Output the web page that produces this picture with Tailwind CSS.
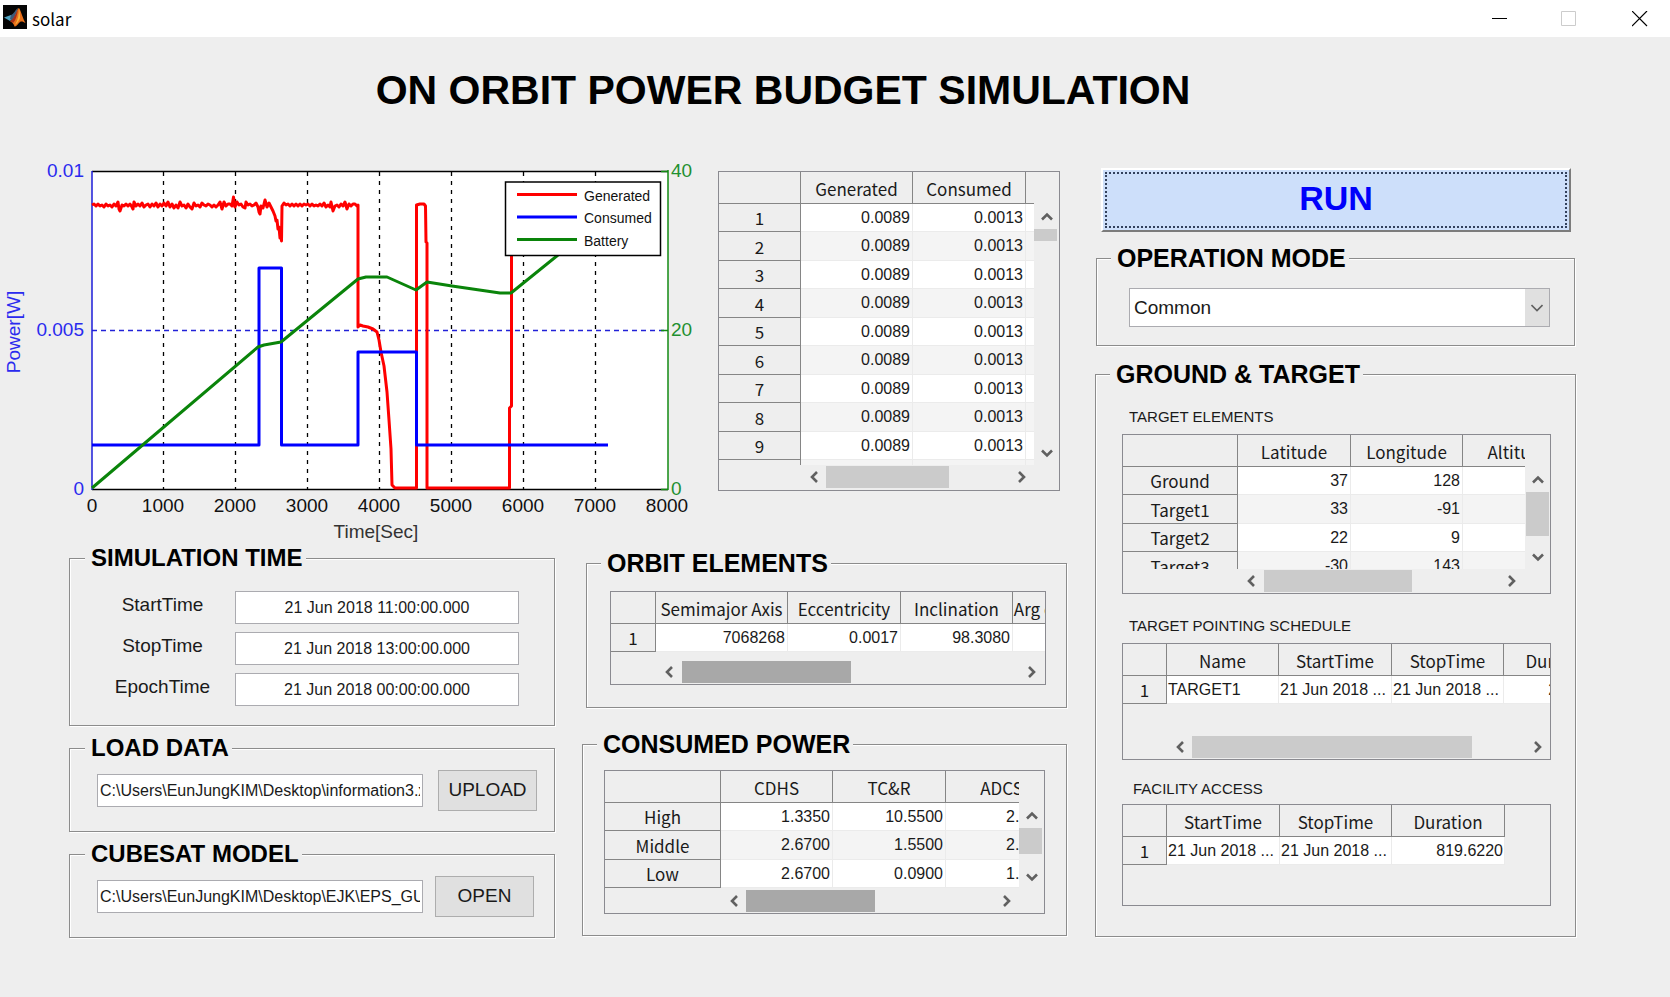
<!DOCTYPE html>
<html lang="en">
<head>
<meta charset="utf-8">
<title>solar</title>
<script src="https://cdn.jsdelivr.net/npm/@tailwindcss/browser@4"></script>
</head>
<body class="min-h-screen bg-[#eee] font-['Liberation_Sans',Arial,sans-serif] text-[#1a1a1a]">

<!-- Shared scroll arrows -->
<svg class="hidden" aria-hidden="true">
  <symbol id="up" viewBox="0 0 12 10"><path d="M1 7.5 6 2.5l5 5" fill="none" stroke="#606060" stroke-width="2.6"/></symbol>
  <symbol id="down" viewBox="0 0 12 10"><path d="M1 2.5l5 5 5-5" fill="none" stroke="#606060" stroke-width="2.6"/></symbol>
  <symbol id="left" viewBox="0 0 10 12"><path d="M8 1 3 6l5 5" fill="none" stroke="#606060" stroke-width="2.6"/></symbol>
  <symbol id="right" viewBox="0 0 10 12"><path d="M2 1l5 5-5 5" fill="none" stroke="#606060" stroke-width="2.6"/></symbol>
</svg>

<header class="flex h-[37px] items-center bg-white pl-[3px] text-black">
  <svg class="mb-[3px] size-6" viewBox="0 0 24 24" aria-hidden="true">
    <rect width="24" height="24" fill="#050505"/>
    <path d="M1 12.5 8 10l3 2.5L7 16z" fill="#4fa3c0"/>
    <path d="M8 10c3-1 4-5 7-7l-3 10-3 2-2-1z" fill="#3d5a78"/>
    <path d="M7 16c2 0 3-2 4-3.500C13 10 14 4 16 3c2 3 4 11 6.500 15-3-2-5-2.500-7 .5-1 1.500-3 3.500-4 3C11 19 9 17 7 16z" fill="#e8701a"/>
    <path d="M7 16c3-1 5-6 8-11-1 5-2 10-5 13z" fill="#a8301a"/>
    <path d="M16 4c0 5-1 11-4 16 3-2 4-5 5-7 0-3 0-6-1-9z" fill="#f7b23c"/>
  </svg>
  <h2 class="ml-[5px] font-['Noto_Sans_CJK_KR',sans-serif] text-[17px] leading-6">solar</h2>
  <div class="ml-auto flex items-center pr-[22px]">
    <button type="button" aria-label="Minimize" class="mr-[53px]"><svg class="size-[16px]" viewBox="0 0 16 16"><path d="M0 7.500h15" stroke="#000"/></svg></button>
    <button type="button" aria-label="Maximize" disabled class="mr-[55px]"><svg class="size-[16px]" viewBox="0 0 16 16"><path d="M.5.5h14v14H.5z" fill="none" stroke="#ccc"/></svg></button>
    <button type="button" aria-label="Close"><svg class="size-[16px]" viewBox="0 0 16 16"><path d="M0 0l15 15M15 0L0 15" stroke="#000" stroke-width="1.200"/></svg></button>
  </div>
</header>

<h1 class="pt-[29px] pr-[104px] text-center text-[41px] leading-[48px] font-bold text-black">ON ORBIT POWER BUDGET SIMULATION</h1>

<main class="mt-9 grid grid-cols-[minmax(0,1067fr)_minmax(0,481fr)] gap-x-[28px] pr-[94px] pb-[60px]">
  <div>
    <div class="grid grid-cols-[minmax(0,700fr)_minmax(0,342fr)] items-start gap-x-[18px] pr-[7px]">

      <!-- Power chart -->
      <svg class="block h-auto w-full" viewBox="0 150 700 395" role="img" aria-label="Power over time">
        <path d="M92 171.500h576v318H92z" fill="#fff"/>
        <path d="M163.500 172v317M235.500 172v317M307.500 172v317M379.500 172v317M451.500 172v317M523.500 172v317M595.500 172v317" stroke="#000" stroke-width="1.300" stroke-dasharray="4 5"/>
        <path d="M92 330.500h576" stroke="#2222d8" stroke-width="1.300" stroke-dasharray="5 4"/>
        <path d="M92 171.500h576M92 489.500h576" stroke="#000" stroke-width="1.300"/>
        <path d="M92 171v319" stroke="#1c1cd8" stroke-width="1.500"/>
        <path d="M668 170v320M661 171.500h7M661 330.500h7M661 489.500h7" stroke="#138a13" stroke-width="1.500"/>
        <g fill="none" stroke-width="3" stroke-linejoin="round">
          <path stroke="#f00" d="M92 205 94 204 96 206 98 204 100 206 102 205 104 207 106 204 108 206 110 205 112 207 114 204 116 206 118 202 119 209 120 211 122 205 124 206 126 204 128 206 130 204 132 207 133 209 134 202 136 206 138 204 140 206 142 203 144 207 146 205 148 204 150 207 152 204 154 206 156 203 158 207 160 204 162 206 164 203 166 206 168 202 170 207 172 204 174 208 176 205 178 208 180 202 182 206 184 205 186 208 188 204 190 207 192 209 194 203 196 206 198 205 200 207 202 203 204 205 206 206 208 204 210 205 212 207 214 205 216 207 218 205 220 202 222 209 224 202 226 206 228 204 230 204 232 206 233.500 197 235 207 237 202 239 205 241 204 243 207 245 208 246 202 248 205 250 204 252 206 254 205 256 203 258 207 259 212 260 214 261 206 263 208 264 204 265 200 267 207 269 203 271 207 273 211 275 216 276 221 277 220 278 229 279 227 280 238 281 233 281.500 241 282 206 284 203 286 205 288 204 290 206 292 204 294 206 296 204 298 206 300 204 302 206 304 204 306 205 308 204 310 206 312 204 314 206 316 205 318 206 320 204 322 206 324 203 326 207 328 205 330 207 331 202 333 211 335 206 337 205 339 207 341 204 343 206 345 202 347 209 349 204 351 206 353 204 355 204 357 206 358 205V327L360 325 363 326 368 327 373 329 377 332 379 340 381 352 384 366 387 392 389 420 391 449 392 485 395 488H416.500V205L420 204 424 204 425.500 206 426 242 427 243V488H509.500V408L511.500 406V245"/>
          <path stroke="#00f" d="M92 445h167V268h22.500V445H358V352h58.500v93H608"/>
          <path stroke="#0a840a" d="M92 488 258 347l6-2 17-3L358 279l8-2h21l29 13 11-8 25 4 48 7h11l47-38"/>
        </g>
        <path d="M505.500 182h155v73.500h-155z" fill="#fff" stroke="#000" stroke-width="1.500"/>
        <path d="M517 194.500h60" stroke="#f00" stroke-width="3"/>
        <path d="M517 217h60" stroke="#00f" stroke-width="3"/>
        <path d="M517 239.500h60" stroke="#0a840a" stroke-width="3"/>
        <g font-size="14" fill="#111">
          <text x="584" y="201">Generated</text>
          <text x="584" y="223">Consumed</text>
          <text x="584" y="246">Battery</text>
        </g>
        <g font-size="19" fill="#2a2aee" text-anchor="end">
          <text x="84" y="177">0.01</text>
          <text x="84" y="336">0.005</text>
          <text x="84" y="495">0</text>
        </g>
        <text transform="translate(20 332) rotate(-90)" font-size="19" fill="#2a2aee" text-anchor="middle">Power[W]</text>
        <g font-size="19" fill="#1f9030">
          <text x="671" y="177">40</text>
          <text x="671" y="336">20</text>
          <text x="671" y="495">0</text>
        </g>
        <g font-size="19" fill="#111" text-anchor="middle">
          <text x="92" y="512">0</text>
          <text x="163" y="512">1000</text>
          <text x="235" y="512">2000</text>
          <text x="307" y="512">3000</text>
          <text x="379" y="512">4000</text>
          <text x="451" y="512">5000</text>
          <text x="523" y="512">6000</text>
          <text x="595" y="512">7000</text>
          <text x="667" y="512">8000</text>
          <text x="376" y="538" fill="#333">Time[Sec]</text>
        </g>
      </svg>

      <!-- Generated / consumed samples -->
      <div class="mt-[21px] grid grid-cols-[minmax(0,1fr)_25px] grid-rows-[293px_25px] border border-[#8a8a90]">
        <div class="overflow-hidden">
          <table aria-label="Generated and consumed power" class="w-[420px] table-fixed border-separate border-spacing-0 text-[16px] leading-5 [&_td]:border-r [&_td]:border-b [&_td]:border-[#ebebeb] [&_td]:bg-white [&_td]:pr-[2px] [&_td]:text-right [&_th]:overflow-hidden [&_th]:border-r [&_th]:border-b [&_th]:border-[#858585] [&_th]:font-['Noto_Sans_CJK_KR',sans-serif] [&_th]:text-[17px] [&_th]:font-normal [&_th]:whitespace-nowrap [&_thead_tr]:h-8 [&_thead_th]:pt-[2px] [&_tbody_th]:pt-px [&_tbody_tr]:h-7 [&_tbody_tr:nth-child(even)]:h-[29px] [&_tbody_tr:nth-child(even)_td]:bg-[#f4f4f4]">
            <colgroup><col class="w-[82px]"><col class="w-[112px]"><col class="w-[113px]"><col></colgroup>
            <thead><tr><th></th><th>Generated</th><th>Consumed</th><td class="border-[#858585]! bg-[#eee]!"></td></tr></thead>
            <tbody>
              <tr><th>1</th><td>0.0089</td><td>0.0013</td><td></td></tr>
              <tr><th>2</th><td>0.0089</td><td>0.0013</td><td></td></tr>
              <tr><th>3</th><td>0.0089</td><td>0.0013</td><td></td></tr>
              <tr><th>4</th><td>0.0089</td><td>0.0013</td><td></td></tr>
              <tr><th>5</th><td>0.0089</td><td>0.0013</td><td></td></tr>
              <tr><th>6</th><td>0.0089</td><td>0.0013</td><td></td></tr>
              <tr><th>7</th><td>0.0089</td><td>0.0013</td><td></td></tr>
              <tr><th>8</th><td>0.0089</td><td>0.0013</td><td></td></tr>
              <tr><th>9</th><td>0.0089</td><td>0.0013</td><td></td></tr>
              <tr><th></th><td></td><td></td><td></td></tr>
            </tbody>
          </table>
        </div>
        <div class="mt-8 flex flex-col items-center">
          <button type="button" aria-label="Scroll up" class="flex h-[25px] w-full items-center justify-center"><svg class="h-[10px] w-3"><use href="#up"/></svg></button>
          <div class="w-full flex-1 pr-[2px]"><div class="h-3 bg-[#cbcbcb]"></div></div>
          <button type="button" aria-label="Scroll down" class="flex h-[25px] w-full items-center justify-center"><svg class="h-[10px] w-3"><use href="#down"/></svg></button>
        </div>
        <div class="ml-[82px] flex h-6">
          <button type="button" aria-label="Scroll left" class="flex w-[25px] items-center justify-center"><svg class="h-3 w-[10px]"><use href="#left"/></svg></button>
          <div class="flex-1 py-px"><div class="h-full w-[67%] bg-[#cbcbcb]"></div></div>
          <button type="button" aria-label="Scroll right" class="flex w-[25px] items-center justify-center"><svg class="h-3 w-[10px]"><use href="#right"/></svg></button>
        </div>
      </div>
    </div>

    <div class="mt-px grid grid-cols-[minmax(0,486fr)_minmax(0,485fr)] gap-x-[27px] pl-[69px]">
      <div class="flex flex-col gap-[10px]">
        <fieldset class="min-w-0 border border-[#8c8c8c] shadow-[1px_1px_0_#fff,inset_1px_1px_0_#fff]">
          <legend class="ml-[15px] bg-[#eee] pr-[3px] pl-[6px] text-2xl leading-6 font-bold text-black">SIMULATION TIME</legend>
          <div class="grid grid-cols-[145px_minmax(0,1fr)] items-center gap-y-2 pt-[21px] pr-[35px] pb-[19px] pl-5 text-[19px] [&_input]:h-[33px] [&_input]:w-full [&_input]:border [&_input]:border-[#ababb0] [&_input]:bg-white [&_input]:text-center [&_input]:text-[16px] [&_label]:pb-1 [&_label]:text-center">
            <label for="start">StartTime</label><input id="start" value="21 Jun 2018 11:00:00.000">
            <label for="stop">StopTime</label><input id="stop" value="21 Jun 2018 13:00:00.000">
            <label for="epoch">EpochTime</label><input id="epoch" value="21 Jun 2018 00:00:00.000">
          </div>
        </fieldset>

        <fieldset class="min-w-0 border border-[#8c8c8c] shadow-[1px_1px_0_#fff,inset_1px_1px_0_#fff]">
          <legend class="ml-[15px] bg-[#eee] pr-[3px] pl-[6px] text-2xl leading-6 font-bold text-black">LOAD DATA</legend>
          <div class="flex items-center gap-[15px] pt-[10px] pr-[17px] pb-5 pl-[27px]">
            <input aria-label="Data file" value="C:\Users\EunJungKIM\Desktop\information3.xlsx" class="h-[33px] min-w-0 flex-1 border border-[#ababb0] bg-white px-[2px] text-[16px]">
            <button type="button" class="h-[41px] w-[99px] border border-[#adadad] bg-[#e0e0e0] text-[19px]">UPLOAD</button>
          </div>
        </fieldset>

        <fieldset class="min-w-0 border border-[#8c8c8c] shadow-[1px_1px_0_#fff,inset_1px_1px_0_#fff]">
          <legend class="ml-[15px] bg-[#eee] pr-[3px] pl-[6px] text-2xl leading-6 font-bold text-black">CUBESAT MODEL</legend>
          <div class="flex items-center gap-3 pt-[10px] pr-5 pb-5 pl-[27px]">
            <input aria-label="Model file" value="C:\Users\EunJungKIM\Desktop\EJK\EPS_GUI\model" class="h-[33px] min-w-0 flex-1 border border-[#ababb0] bg-white px-[2px] text-[16px]">
            <button type="button" class="h-[41px] w-[99px] border border-[#adadad] bg-[#e0e0e0] text-[19px]">OPEN</button>
          </div>
        </fieldset>
      </div>

      <div class="flex flex-col gap-6 pt-[5px]">
        <fieldset class="ml-1 min-w-0 border border-[#8c8c8c] shadow-[1px_1px_0_#fff,inset_1px_1px_0_#fff]">
          <legend class="ml-[14px] bg-[#eee] pr-[3px] pl-[6px] text-[25px] leading-6 font-bold text-black">ORBIT ELEMENTS</legend>
          <div class="pt-4 pr-5 pb-[22px] pl-[23px]">
            <div class="grid grid-rows-[68px_24px] border border-[#8a8a90]">
              <div class="overflow-hidden">
                <table aria-label="Orbit elements" class="w-[562px] table-fixed border-separate border-spacing-0 text-[16px] leading-5 [&_td]:border-r [&_td]:border-b [&_td]:border-[#ebebeb] [&_td]:bg-white [&_td]:pr-[2px] [&_td]:text-right [&_th]:overflow-hidden [&_th]:border-r [&_th]:border-b [&_th]:border-[#858585] [&_th]:font-['Noto_Sans_CJK_KR',sans-serif] [&_th]:text-[17px] [&_th]:font-normal [&_th]:whitespace-nowrap [&_thead_tr]:h-8 [&_thead_th]:pt-[2px] [&_tbody_th]:pt-px [&_tbody_tr]:h-7">
                  <colgroup><col class="w-[45px]"><col class="w-[132px]"><col class="w-[113px]"><col class="w-[112px]"><col></colgroup>
                  <thead><tr><th></th><th>Semimajor Axis</th><th>Eccentricity</th><th>Inclination</th><th>Arg of Perigee Angle</th></tr></thead>
                  <tbody><tr><th>1</th><td>7068268</td><td>0.0017</td><td>98.3080</td><td></td></tr></tbody>
                </table>
              </div>
              <div class="ml-[45px] flex">
                <button type="button" aria-label="Scroll left" class="flex w-[26px] items-center justify-center"><svg class="h-3 w-[10px]"><use href="#left"/></svg></button>
                <div class="flex-1 py-px"><div class="h-full w-1/2 bg-[#a8a8a8]"></div></div>
                <button type="button" aria-label="Scroll right" class="flex w-[26px] items-center justify-center"><svg class="h-3 w-[10px]"><use href="#right"/></svg></button>
              </div>
            </div>
          </div>
        </fieldset>

        <fieldset class="min-w-0 border border-[#8c8c8c] shadow-[1px_1px_0_#fff,inset_1px_1px_0_#fff]">
          <legend class="ml-[14px] bg-[#eee] pr-[3px] pl-[6px] text-[25px] leading-6 font-bold text-black">CONSUMED POWER</legend>
          <div class="pt-[14px] pr-[21px] pb-[21px] pl-[21px]">
            <div class="grid grid-cols-[minmax(0,1fr)_25px] grid-rows-[118px_24px] border border-[#8a8a90]">
              <div class="overflow-hidden">
                <table aria-label="Consumed power" class="w-[453px] table-fixed border-separate border-spacing-0 text-[16px] leading-5 [&_td]:border-r [&_td]:border-b [&_td]:border-[#ebebeb] [&_td]:bg-white [&_td]:pr-[2px] [&_td]:text-right [&_th]:overflow-hidden [&_th]:border-r [&_th]:border-b [&_th]:border-[#858585] [&_th]:font-['Noto_Sans_CJK_KR',sans-serif] [&_th]:text-[17px] [&_th]:font-normal [&_th]:whitespace-nowrap [&_thead_tr]:h-8 [&_thead_th]:pt-[2px] [&_tbody_th]:pt-px [&_tbody_tr]:h-7 [&_tbody_tr:nth-child(even)]:h-[29px] [&_tbody_tr:nth-child(even)_td]:bg-[#f4f4f4]">
                  <colgroup><col class="w-[116px]"><col class="w-[112px]"><col class="w-[113px]"><col></colgroup>
                  <thead><tr><th></th><th>CDHS</th><th>TC&amp;R</th><th>ADCS</th></tr></thead>
                  <tbody>
                    <tr><th>High</th><td>1.3350</td><td>10.5500</td><td>2.0000</td></tr>
                    <tr><th>Middle</th><td>2.6700</td><td>1.5500</td><td>2.0000</td></tr>
                    <tr><th>Low</th><td>2.6700</td><td>0.0900</td><td>1.0000</td></tr>
                  </tbody>
                </table>
              </div>
              <div class="mt-[33px] flex flex-col items-center">
                <button type="button" aria-label="Scroll up" class="flex h-6 w-full items-center justify-center"><svg class="h-[10px] w-3"><use href="#up"/></svg></button>
                <div class="w-full flex-1 pr-[2px]"><div class="h-[26px] bg-[#cbcbcb]"></div></div>
                <button type="button" aria-label="Scroll down" class="flex h-6 w-full items-center justify-center"><svg class="h-[10px] w-3"><use href="#down"/></svg></button>
              </div>
              <div class="ml-[116px] flex">
                <button type="button" aria-label="Scroll left" class="flex w-[25px] items-center justify-center"><svg class="h-3 w-[10px]"><use href="#left"/></svg></button>
                <div class="flex-1 py-px"><div class="h-full w-[52%] bg-[#a8a8a8]"></div></div>
                <button type="button" aria-label="Scroll right" class="flex w-[25px] items-center justify-center"><svg class="h-3 w-[10px]"><use href="#right"/></svg></button>
              </div>
            </div>
          </div>
        </fieldset>
      </div>
    </div>
  </div>

  <div class="flex flex-col pt-[18px]">
    <button type="button" class="mr-[5px] ml-[6px] h-16 border-2 border-t-white border-r-[#7c7c7c] border-b-[#7c7c7c] border-l-white bg-[#cddffa] p-[2px] text-[34px] leading-[48px] font-bold text-[#0000fa]"><span class="flex h-full items-center justify-center border-2 border-dotted border-[#33415c] pb-[5px]">RUN</span></button>

    <fieldset class="mt-[14px] mr-px ml-px min-w-0 border border-[#8c8c8c] shadow-[1px_1px_0_#fff,inset_1px_1px_0_#fff]">
      <legend class="ml-[14px] bg-[#eee] pr-[3px] pl-[6px] text-[25px] leading-6 font-bold text-black">OPERATION MODE</legend>
      <div class="pt-[18px] pr-6 pb-[18px] pl-8">
        <div class="grid border border-[#ababb0] bg-white">
          <select aria-label="Operation mode" class="col-start-1 row-start-1 h-[37px] w-full appearance-none pt-[2px] pl-1 text-[19px]"><option>Common</option></select>
          <span class="pointer-events-none col-start-1 row-start-1 flex w-6 items-center justify-center justify-self-end bg-[#e0e0e0]"><svg class="h-2 w-3" viewBox="0 0 12 8"><path d="M.5 1 6 6.500 11.500 1" fill="none" stroke="#606060" stroke-width="1.600"/></svg></span>
        </div>
      </div>
    </fieldset>

    <fieldset class="mt-4 min-w-0 border border-[#8c8c8c] shadow-[1px_1px_0_#fff,inset_1px_1px_0_#fff]">
      <legend class="ml-[14px] bg-[#eee] pr-[3px] pl-[6px] text-[25px] leading-6 font-bold text-black">GROUND &amp; TARGET</legend>
      <div class="pt-[21px] pr-6 pb-[30px] pl-[26px]">
        <h3 id="t-elements" class="mb-[7px] pl-[7px] text-[15px] leading-5">TARGET ELEMENTS</h3>
        <div class="grid grid-cols-[minmax(0,1fr)_25px] grid-rows-[134px_24px] border border-[#8a8a90]">
          <div class="overflow-hidden">
            <table aria-labelledby="t-elements" class="w-[453px] table-fixed border-separate border-spacing-0 text-[16px] leading-5 [&_td]:border-r [&_td]:border-b [&_td]:border-[#ebebeb] [&_td]:bg-white [&_td]:pr-[2px] [&_td]:text-right [&_th]:overflow-hidden [&_th]:border-r [&_th]:border-b [&_th]:border-[#858585] [&_th]:font-['Noto_Sans_CJK_KR',sans-serif] [&_th]:text-[17px] [&_th]:font-normal [&_th]:whitespace-nowrap [&_thead_tr]:h-8 [&_thead_th]:pt-[2px] [&_tbody_th]:pt-px [&_tbody_tr]:h-7 [&_tbody_tr:nth-child(even)]:h-[29px] [&_tbody_tr:nth-child(even)_td]:bg-[#f4f4f4]">
              <colgroup><col class="w-[115px]"><col class="w-[113px]"><col class="w-[112px]"><col></colgroup>
              <thead><tr><th></th><th>Latitude</th><th>Longitude</th><th>Altitude</th></tr></thead>
              <tbody>
                <tr><th>Ground</th><td>37</td><td>128</td><td></td></tr>
                <tr><th>Target1</th><td>33</td><td>-91</td><td></td></tr>
                <tr><th>Target2</th><td>22</td><td>9</td><td></td></tr>
                <tr><th>Target3</th><td>-30</td><td>143</td><td></td></tr>
              </tbody>
            </table>
          </div>
          <div class="mt-[33px] flex flex-col items-center">
            <button type="button" aria-label="Scroll up" class="flex h-6 w-full items-center justify-center"><svg class="h-[10px] w-3"><use href="#up"/></svg></button>
            <div class="w-full flex-1 px-px"><div class="h-11 bg-[#cbcbcb]"></div></div>
            <button type="button" aria-label="Scroll down" class="flex h-6 w-full items-center justify-center"><svg class="h-[10px] w-3"><use href="#down"/></svg></button>
          </div>
          <div class="ml-[115px] flex">
            <button type="button" aria-label="Scroll left" class="flex w-[26px] items-center justify-center"><svg class="h-3 w-[10px]"><use href="#left"/></svg></button>
            <div class="flex-1 py-px"><div class="h-full w-[63%] bg-[#cbcbcb]"></div></div>
            <button type="button" aria-label="Scroll right" class="flex w-[26px] items-center justify-center"><svg class="h-3 w-[10px]"><use href="#right"/></svg></button>
          </div>
        </div>

        <h3 id="t-schedule" class="mt-[22px] mb-[7px] pl-[7px] text-[15px] leading-5">TARGET POINTING SCHEDULE</h3>
        <div class="grid grid-rows-[91px_24px] border border-[#8a8a90]">
          <div class="overflow-hidden">
            <table aria-labelledby="t-schedule" class="w-[494px] table-fixed border-separate border-spacing-0 text-[16px] leading-5 [&_td]:border-r [&_td]:border-b [&_td]:border-[#ebebeb] [&_td]:bg-white [&_td]:px-px [&_td]:whitespace-nowrap [&_th]:overflow-hidden [&_th]:border-r [&_th]:border-b [&_th]:border-[#858585] [&_th]:font-['Noto_Sans_CJK_KR',sans-serif] [&_th]:text-[17px] [&_th]:font-normal [&_th]:whitespace-nowrap [&_thead_tr]:h-8 [&_thead_th]:pt-[2px] [&_tbody_th]:pt-px [&_tbody_tr]:h-7">
              <colgroup><col class="w-[44px]"><col class="w-[112px]"><col class="w-[113px]"><col class="w-[112px]"><col></colgroup>
              <thead><tr><th></th><th>Name</th><th>StartTime</th><th>StopTime</th><th>Duration</th></tr></thead>
              <tbody><tr><th>1</th><td>TARGET1</td><td>21 Jun 2018 ...</td><td>21 Jun 2018 ...</td><td class="text-right">240.0000</td></tr></tbody>
            </table>
          </div>
          <div class="ml-[44px] flex">
            <button type="button" aria-label="Scroll left" class="flex w-[25px] items-center justify-center"><svg class="h-3 w-[10px]"><use href="#left"/></svg></button>
            <div class="flex-1 py-px"><div class="h-full w-[84%] bg-[#cbcbcb]"></div></div>
            <button type="button" aria-label="Scroll right" class="flex w-[25px] items-center justify-center"><svg class="h-3 w-[10px]"><use href="#right"/></svg></button>
          </div>
        </div>

        <h3 id="t-access" class="mt-[19px] mb-[5px] pl-[11px] text-[15px] leading-5">FACILITY ACCESS</h3>
        <div class="h-[102px] overflow-hidden border border-[#8a8a90]">
          <table aria-labelledby="t-access" class="w-[382px] table-fixed border-separate border-spacing-0 text-[16px] leading-5 [&_td]:border-r [&_td]:border-b [&_td]:border-[#ebebeb] [&_td]:bg-white [&_td]:px-px [&_td]:whitespace-nowrap [&_th]:overflow-hidden [&_th]:border-r [&_th]:border-b [&_th]:border-[#858585] [&_th]:font-['Noto_Sans_CJK_KR',sans-serif] [&_th]:text-[17px] [&_th]:font-normal [&_th]:whitespace-nowrap [&_thead_tr]:h-8 [&_thead_th]:pt-[2px] [&_tbody_th]:pt-px [&_tbody_tr]:h-7">
            <colgroup><col class="w-[44px]"><col class="w-[113px]"><col class="w-[112px]"><col></colgroup>
            <thead><tr><th></th><th>StartTime</th><th>StopTime</th><th>Duration</th></tr></thead>
            <tbody><tr><th>1</th><td>21 Jun 2018 ...</td><td>21 Jun 2018 ...</td><td class="text-right">819.6220</td></tr></tbody>
          </table>
        </div>
      </div>
    </fieldset>
  </div>
</main>
</body>
</html>
